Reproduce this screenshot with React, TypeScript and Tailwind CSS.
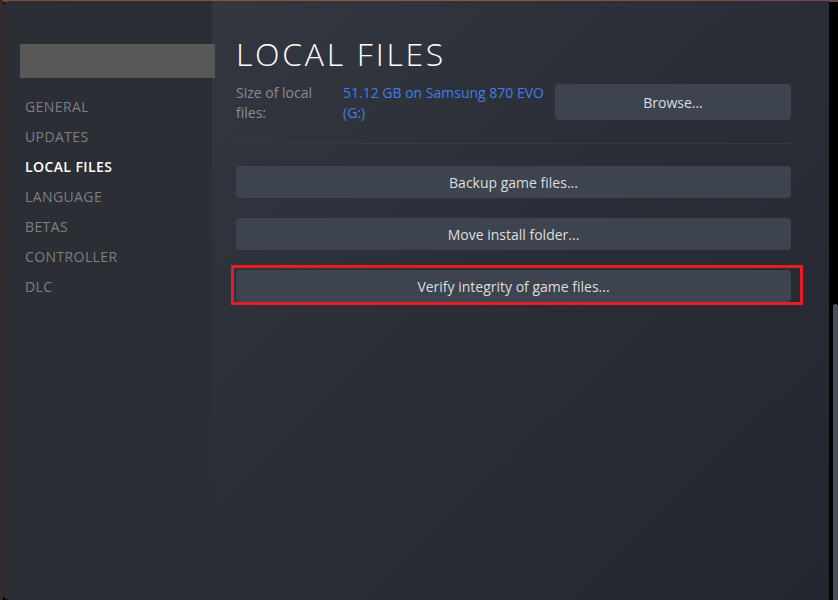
export default function App() {
  const nav = ['GENERAL', 'UPDATES', 'LOCAL FILES', 'LANGUAGE', 'BETAS', 'CONTROLLER', 'DLC']

  return (
    <div
      className="relative w-[838px] h-[600px] overflow-hidden bg-black"
      style={{ fontFamily: '"Open Sans", "Liberation Sans", Arial, sans-serif' }}
    >
      {/* background peeking around the window */}
      <div className="absolute top-0 left-0 right-0 h-[2px] bg-gradient-to-r from-[#7a4d3d] via-[#8a5a45] to-[#6e4a44]" />
      <div className="absolute top-0 left-0 bottom-0 w-[3px] bg-[#3a2a28]" />

      {/* scrollbar */}
      <div className="absolute right-0 top-[304px] bottom-0 w-[5px] rounded-t-sm bg-[#4b505a]" />

      <div className="absolute top-[1px] left-[2px] w-[827px] bottom-0 flex rounded-tl-lg rounded-bl-lg overflow-hidden">
        {/* Sidebar */}
        <aside className="w-[210px] shrink-0 bg-[#2b2e35] pt-[43px]">
          <div className="ml-[18px] w-[195px] h-[34px] bg-[#585858] relative z-10" />
          <ul className="mt-[14px] pl-[23px] flex flex-col">
            {nav.map((n) => (
              <li
                key={n}
                className={`h-[30px] leading-[30px] text-[14px] tracking-[0.4px] ${
                  n === 'LOCAL FILES' ? 'text-white font-semibold' : 'text-[#7d7f83]'
                }`}
              >
                {n}
              </li>
            ))}
          </ul>
        </aside>

        {/* Main */}
        <main className="flex-1 bg-gradient-to-br from-[#33373f] via-[#2a2d35] to-[#24272e] pl-[24px] pr-[38px] pt-[34px]">
          <h1 className="text-[32px] leading-[38px] text-white font-light tracking-[2.7px]">LOCAL FILES</h1>

          <div className="mt-[11px] flex items-start">
            <div className="w-[107px] text-[14px] leading-[20px] text-[#8b8e94] -mt-[1px]">
              Size of local
              <br />
              files:
            </div>
            <div className="w-[212px] text-[14px] leading-[20px] text-[#3f7fea] -mt-[1px]">
              51.12 GB on Samsung 870 EVO (G:)
            </div>
            <button className="flex-1 h-[36px] rounded-sm bg-[#3d4450] text-[14px] text-[#dcdedf]">
              Browse...
            </button>
          </div>

          <div className="mt-[20px] h-px bg-[#363a42]" />

          <div className="mt-[22px] flex flex-col gap-[20px]">
            <button className="h-[32px] rounded-sm bg-[#3d4450] text-[14px] text-[#dcdedf]">
              Backup game files...
            </button>
            <button className="h-[32px] rounded-sm bg-[#3d4450] text-[14px] text-[#dcdedf]">
              Move install folder...
            </button>
            <div className="relative">
              <button className="w-full h-[32px] rounded-sm bg-[#3d4450] text-[14px] text-[#dcdedf]">
                Verify integrity of game files...
              </button>
              <div className="absolute -left-[5px] -top-[5px] -right-[12px] -bottom-[3px] border-[3px] border-[#e81c24] pointer-events-none" />
            </div>
          </div>
        </main>
      </div>
    </div>
  )
}
